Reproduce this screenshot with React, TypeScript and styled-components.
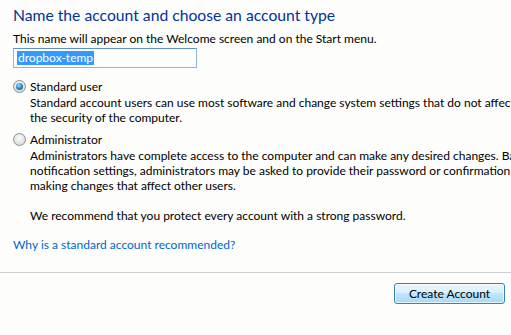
import React from "react";
import styled, { createGlobalStyle } from "styled-components";

const GlobalStyle = createGlobalStyle`
  html, body {
    margin: 0;
    padding: 0;
    background: #fdfdfb;
  }
  body {
    width: 511px;
    height: 335px;
    overflow: hidden;
    font-family: "Segoe UI", Lato, "Noto Sans", sans-serif;
  }
`;

const Page = styled.div`
  width: 511px;
  height: 335px;
  overflow: hidden;
  display: flex;
  flex-direction: column;
  padding-top: 5px;
  box-sizing: border-box;
  color: #000;
  font-size: 12px;
  line-height: 15px;
`;

const Content = styled.div`
  padding-left: 13px;
  display: flex;
  flex-direction: column;
  white-space: nowrap;
`;

const Title = styled.h1`
  margin: 0;
  font-size: 15.7px;
  line-height: 20px;
  font-weight: 400;
  color: #003399;
`;

const Hint = styled.p`
  margin: 6px 0 0;
`;

const NameInput = styled.div`
  margin-top: 2px;
  width: 184px;
  height: 20px;
  box-sizing: border-box;
  border: 1px solid #8cb6de;
  border-top-color: #5a93cb;
  background: #fff;
  padding: 2px 3px;
  display: flex;
  align-items: center;
`;

const Selected = styled.span`
  background: #3399ff;
  color: #fff;
  line-height: 14px;
  padding: 0 1px;
`;

const Choice = styled.div<{ $gap: number }>`
  margin-top: ${(p) => p.$gap}px;
  display: flex;
  flex-direction: column;
`;

const ChoiceLabel = styled.label`
  display: flex;
  align-items: center;
  gap: 4px;
  height: 16px;
`;

const Radio = styled.span<{ $checked?: boolean }>`
  position: relative;
  width: 13px;
  height: 13px;
  box-sizing: border-box;
  border-radius: 50%;
  border: 1px solid #8f8f8f;
  background: radial-gradient(circle at 50% 35%, #fbfbfb 0%, #e2e2e2 60%, #cfcfcf 100%);

  &::after {
    content: "";
    display: ${(p) => (p.$checked ? "block" : "none")};
    position: absolute;
    left: 2px;
    top: 2px;
    width: 7px;
    height: 7px;
    border-radius: 50%;
    background: radial-gradient(circle at 40% 35%, #9fe0ff 0%, #2f8fd0 45%, #0c3f6e 100%);
  }
`;

const Description = styled.div`
  padding-left: 17px;
  margin-top: 1px;
`;

const Note = styled.p`
  margin: 15px 0 0;
  padding-left: 17px;
`;

const HelpLink = styled.a`
  margin-top: 14px;
  color: #0066cc;
  text-decoration: none;
  cursor: pointer;
  align-self: flex-start;
`;

const Separator = styled.hr`
  margin: 20px 0 0;
  border: 0;
  border-top: 1px solid #cfcfcf;
  width: 100%;
`;

const Footer = styled.div`
  display: flex;
  justify-content: flex-end;
  padding: 10px 6px 0 0;
`;

const Button = styled.button`
  width: 111px;
  height: 21px;
  box-sizing: border-box;
  border: 1px solid #3c7fb1;
  border-radius: 3px;
  background: linear-gradient(#eaf6fd 0%, #d9f0fc 45%, #bee6fd 50%, #a7d9f5 100%);
  box-shadow: inset 0 0 0 1px rgba(255, 255, 255, 0.7);
  font-family: inherit;
  font-size: 12px;
  color: #000;
  padding: 0;
  line-height: 17px;
`;

export default function App() {
  return (
    <Page>
      <GlobalStyle />
      <Content>
        <Title>Name the account and choose an account type</Title>
        <Hint>This name will appear on the Welcome screen and on the Start menu.</Hint>
        <NameInput>
          <Selected>dropbox-temp</Selected>
        </NameInput>

        <Choice $gap={10}>
          <ChoiceLabel>
            <Radio $checked />
            Standard user
          </ChoiceLabel>
          <Description>
            Standard account users can use most software and change system settings that do not affect
            <br />
            the security of the computer.
          </Description>
        </Choice>

        <Choice $gap={6}>
          <ChoiceLabel>
            <Radio />
            Administrator
          </ChoiceLabel>
          <Description>
            Administrators have complete access to the computer and can make any desired changes. Based on
            <br />
            notification settings, administrators may be asked to provide their password or confirmation before
            <br />
            making changes that affect other users.
          </Description>
        </Choice>

        <Note>We recommend that you protect every account with a strong password.</Note>
        <HelpLink>Why is a standard account recommended?</HelpLink>
      </Content>
      <Separator />
      <Footer>
        <Button>Create Account</Button>
      </Footer>
    </Page>
  );
}
